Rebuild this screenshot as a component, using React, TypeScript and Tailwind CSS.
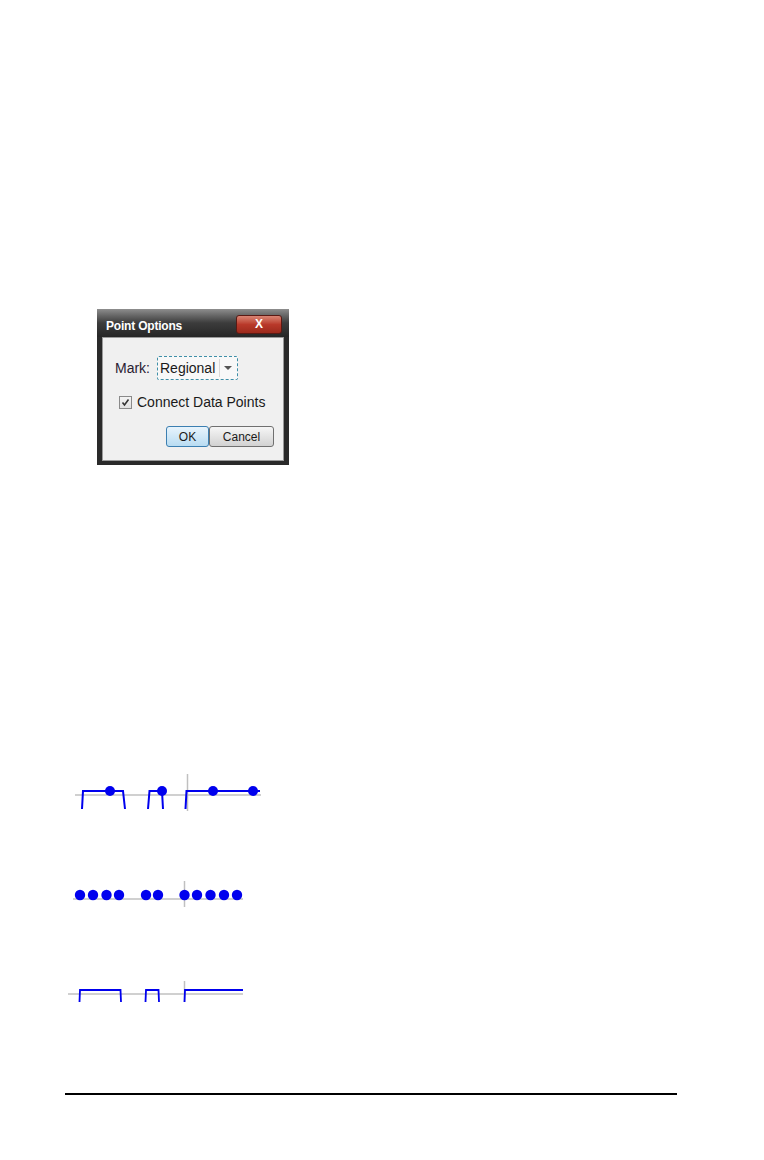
import React from "react";

const BLUE = "#0000ee";
const AXIS = "#c0c0c0";

function StepChart() {
  return (
    <svg width="200" height="44" viewBox="70 770 200 44" className="block">
      <line x1="75" y1="794" x2="261" y2="794" stroke={AXIS} strokeWidth="1.5" />
      <line x1="187.5" y1="773" x2="187.5" y2="810" stroke={AXIS} strokeWidth="1.5" />
      <g fill="none" stroke={BLUE} strokeWidth="2">
        <polyline points="82,808 83,790 123,790 125,808" />
        <polyline points="148,808 149.5,790 162,790 163,808" />
        <polyline points="185.5,808 186.5,790 260,790" />
      </g>
      <g fill={BLUE}>
        <circle cx="110" cy="790" r="5" />
        <circle cx="162" cy="790" r="5" />
        <circle cx="213" cy="790" r="5" />
        <circle cx="253" cy="790" r="5" />
      </g>
    </svg>
  );
}

function DotChart() {
  const xs = [80, 93, 106.5, 119, 146, 158, 184.5, 197, 210.5, 224, 237];
  return (
    <svg width="180" height="30" viewBox="70 878 180 30" className="block">
      <line x1="73" y1="898" x2="243" y2="898" stroke={AXIS} strokeWidth="1.5" />
      <line x1="184.5" y1="880" x2="184.5" y2="906" stroke={AXIS} strokeWidth="1.5" />
      <g fill={BLUE}>
        {xs.map((x) => (
          <circle key={x} cx={x} cy="894" r="5.2" />
        ))}
      </g>
    </svg>
  );
}

function PulseChart() {
  return (
    <svg width="180" height="26" viewBox="65 978 180 26" className="block">
      <line x1="68" y1="993" x2="243" y2="993" stroke={AXIS} strokeWidth="1.5" />
      <line x1="184.5" y1="980" x2="184.5" y2="1001" stroke={AXIS} strokeWidth="1.5" />
      <g fill="none" stroke={BLUE} strokeWidth="1.8">
        <polyline points="79.5,1001 80,989 120.5,989 121,1001" />
        <polyline points="145.5,1001 146,989 158.5,989 159,1001" />
        <polyline points="184.5,1001 185,989 243,989" />
      </g>
    </svg>
  );
}

function PointOptionsDialog() {
  return (
    <div
      className="w-[192px] h-[156px] bg-[#2a2a2a] flex flex-col px-[5px] pb-[4px]"
      style={{ fontFamily: '"Liberation Sans", Arial, sans-serif' }}
    >
      <div className="h-[28px] -mx-[5px] px-[9px] flex items-center justify-between bg-gradient-to-b from-[#8e8e8e] via-[#3c3c3c] to-[#262626]">
        <span className="text-[12px] font-bold text-white tracking-[-0.2px] mt-[6px]">Point Options</span>
        <div className="w-[46px] h-[19px] mt-[2px] -mr-[2px] rounded-[3px] border border-[#5a1a14] bg-gradient-to-b from-[#d98474] via-[#b9392a] to-[#9c2a1c] flex items-center justify-center">
          <span className="text-white text-[12px] font-bold leading-none">X</span>
        </div>
      </div>
      <div className="flex-1 bg-[#f0f0f0] border border-[#9a9a9a] flex flex-col pl-[12px] pt-[18px]">
        <div className="flex items-center gap-[7px]">
          <span className="text-[14px] text-[#2a2030]">Mark:</span>
          <div className="w-[81px] h-[24px] border border-dashed border-[#3f8fa8] rounded-[2px] bg-[#f8f8f8] flex items-center">
            <span className="text-[14px] text-[#1a1a1a] pl-[2px] leading-none">Regional</span>
            <div className="ml-auto mr-[2px] w-[16px] h-[18px] border-l border-[#d8d8d8] flex items-center justify-center">
              <svg width="8" height="4" viewBox="0 0 8 4">
                <polygon points="0,0 8,0 4,4" fill="#555" />
              </svg>
            </div>
          </div>
        </div>
        <div className="flex items-center gap-[5px] mt-[12px] pl-[4px]">
          <div className="w-[13px] h-[13px] border border-[#8a8a8a] bg-gradient-to-b from-[#f4f4f4] to-[#e0e0e0] flex items-center justify-center">
            <svg width="9" height="9" viewBox="0 0 9 9">
              <polyline points="1.5,4.5 3.5,7 7.5,1.5" fill="none" stroke="#333" strokeWidth="1.6" />
            </svg>
          </div>
          <span className="text-[14px] text-[#1a1a1a]">Connect Data Points</span>
        </div>
        <div className="flex mt-[13px] ml-[51px]">
          <div className="w-[43px] h-[21px] rounded-[3px] border border-[#3c7fb1] bg-gradient-to-b from-[#e8f4fc] to-[#b9dcf2] flex items-center justify-center">
            <span className="text-[12px] text-[#1a1a1a]">OK</span>
          </div>
          <div className="w-[65px] h-[21px] rounded-[3px] border border-[#707070] bg-gradient-to-b from-[#f6f6f6] to-[#d2d2d2] flex items-center justify-center">
            <span className="text-[12px] text-[#1a1a1a]">Cancel</span>
          </div>
        </div>
      </div>
    </div>
  );
}

export default function App() {
  return (
    <div className="w-[764px] h-[1160px] bg-white overflow-hidden flex flex-col">
      <div className="ml-[97px] mt-[309px]">
        <PointOptionsDialog />
      </div>

      <div className="ml-[70px] mt-[306px]">
        <StepChart />
      </div>

      <div className="ml-[70px] mt-[64px]">
        <DotChart />
      </div>

      <div className="ml-[65px] mt-[70px]">
        <PulseChart />
      </div>

      <div className="ml-[65px] mt-[88px] w-[612px] h-[2px] bg-black" />
    </div>
  );
}
